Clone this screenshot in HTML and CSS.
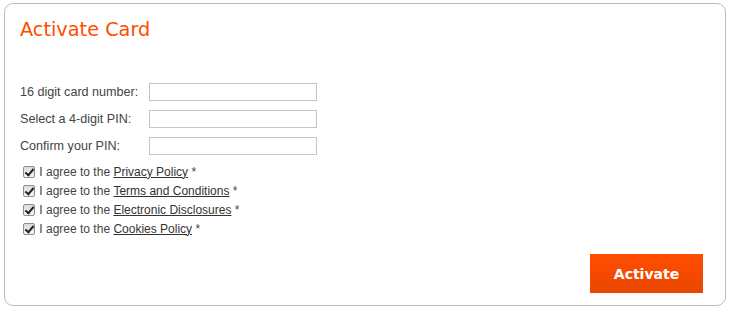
FILE: index.html
```html
<!DOCTYPE html>
<html>
<head>
<meta charset="utf-8">
<link rel="stylesheet" href="styles.css">
</head>
<body>
<div class="card">
  <h1 class="title">Activate Card</h1>
  <form class="form">
    <div class="fields">
      <label class="field"><span class="label">16 digit card number:</span><input class="input" type="text"></label>
      <label class="field"><span class="label">Select a 4-digit PIN:</span><input class="input" type="password"></label>
      <label class="field"><span class="label">Confirm your PIN:</span><input class="input" type="password"></label>
    </div>
    <div class="agreements">
      <label class="agree"><input type="checkbox" class="check" checked> I agree to the <a href="#">Privacy Policy</a> *</label>
      <label class="agree"><input type="checkbox" class="check" checked> I agree to the <a href="#">Terms and Conditions</a> *</label>
      <label class="agree"><input type="checkbox" class="check" checked> I agree to the <a href="#">Electronic Disclosures</a> *</label>
      <label class="agree"><input type="checkbox" class="check" checked> I agree to the <a href="#">Cookies Policy</a> *</label>
    </div>
    <div class="actions">
      <button type="button" class="btn">Activate</button>
    </div>
  </form>
</div>
</body>
</html>
```
FILE: styles.css
```css
html, body { margin: 0; padding: 0; background: #fff; }
body { padding: 3px 3px 0 4px; font-family: "Liberation Sans", Arial, sans-serif; }
.card {
  width: 722px;
  height: 303px;
  box-sizing: border-box;
  border: 1px solid #bdbdbd;
  border-radius: 9px;
  padding: 13px 22px 0 15px;
  display: flex;
  flex-direction: column;
}
.title {
  margin: 0;
  font-family: "DejaVu Sans", Verdana, sans-serif;
  font-weight: normal;
  font-size: 19.3px;
  line-height: 26px;
  color: #ff4c00;
}
.form { display: flex; flex-direction: column; flex: 1; }
.fields { margin-top: 40px; display: flex; flex-direction: column; gap: 9px; }
.field { display: flex; align-items: center; height: 18px; }
.label { width: 129px; font-size: 12.6px; color: #444; }
.input {
  width: 168px;
  height: 18px;
  box-sizing: border-box;
  border: 1px solid #c4c4c4;
  border-radius: 0;
  padding: 0;
  margin: 0;
  background: #fff;
}
.agreements { margin-top: 7px; display: flex; flex-direction: column; }
.agree {
  display: flex; align-items: center; height: 19px;
  font-size: 12px; color: #444; white-space: pre;
  padding-left: 3px;
}
.check {
  appearance: none;
  -webkit-appearance: none;
  position: relative;
  width: 12px; height: 12px;
  margin: 0 1px 0 0;
  box-sizing: border-box;
  border: 1px solid #8e8e8e;
  border-radius: 2px;
  background: linear-gradient(#dcdcdc, #f4f4f4);
}
.check:checked::after {
  content: "";
  position: absolute;
  left: 3px; top: 0px;
  width: 3px; height: 7px;
  border: solid #222;
  border-width: 0 2px 2px 0;
  transform: rotate(40deg);
}
.agree a { color: #333; text-decoration: underline; }
.actions { display: flex; justify-content: flex-end; margin-top: 16px; }
.btn {
  width: 113px; height: 39px;
  border: none; border-radius: 0;
  background: linear-gradient(#ff4d00, #e84700);
  color: #fff;
  font-family: "DejaVu Sans", Verdana, sans-serif;
  font-weight: bold;
  font-size: 14px;
  padding: 0;
}
```
